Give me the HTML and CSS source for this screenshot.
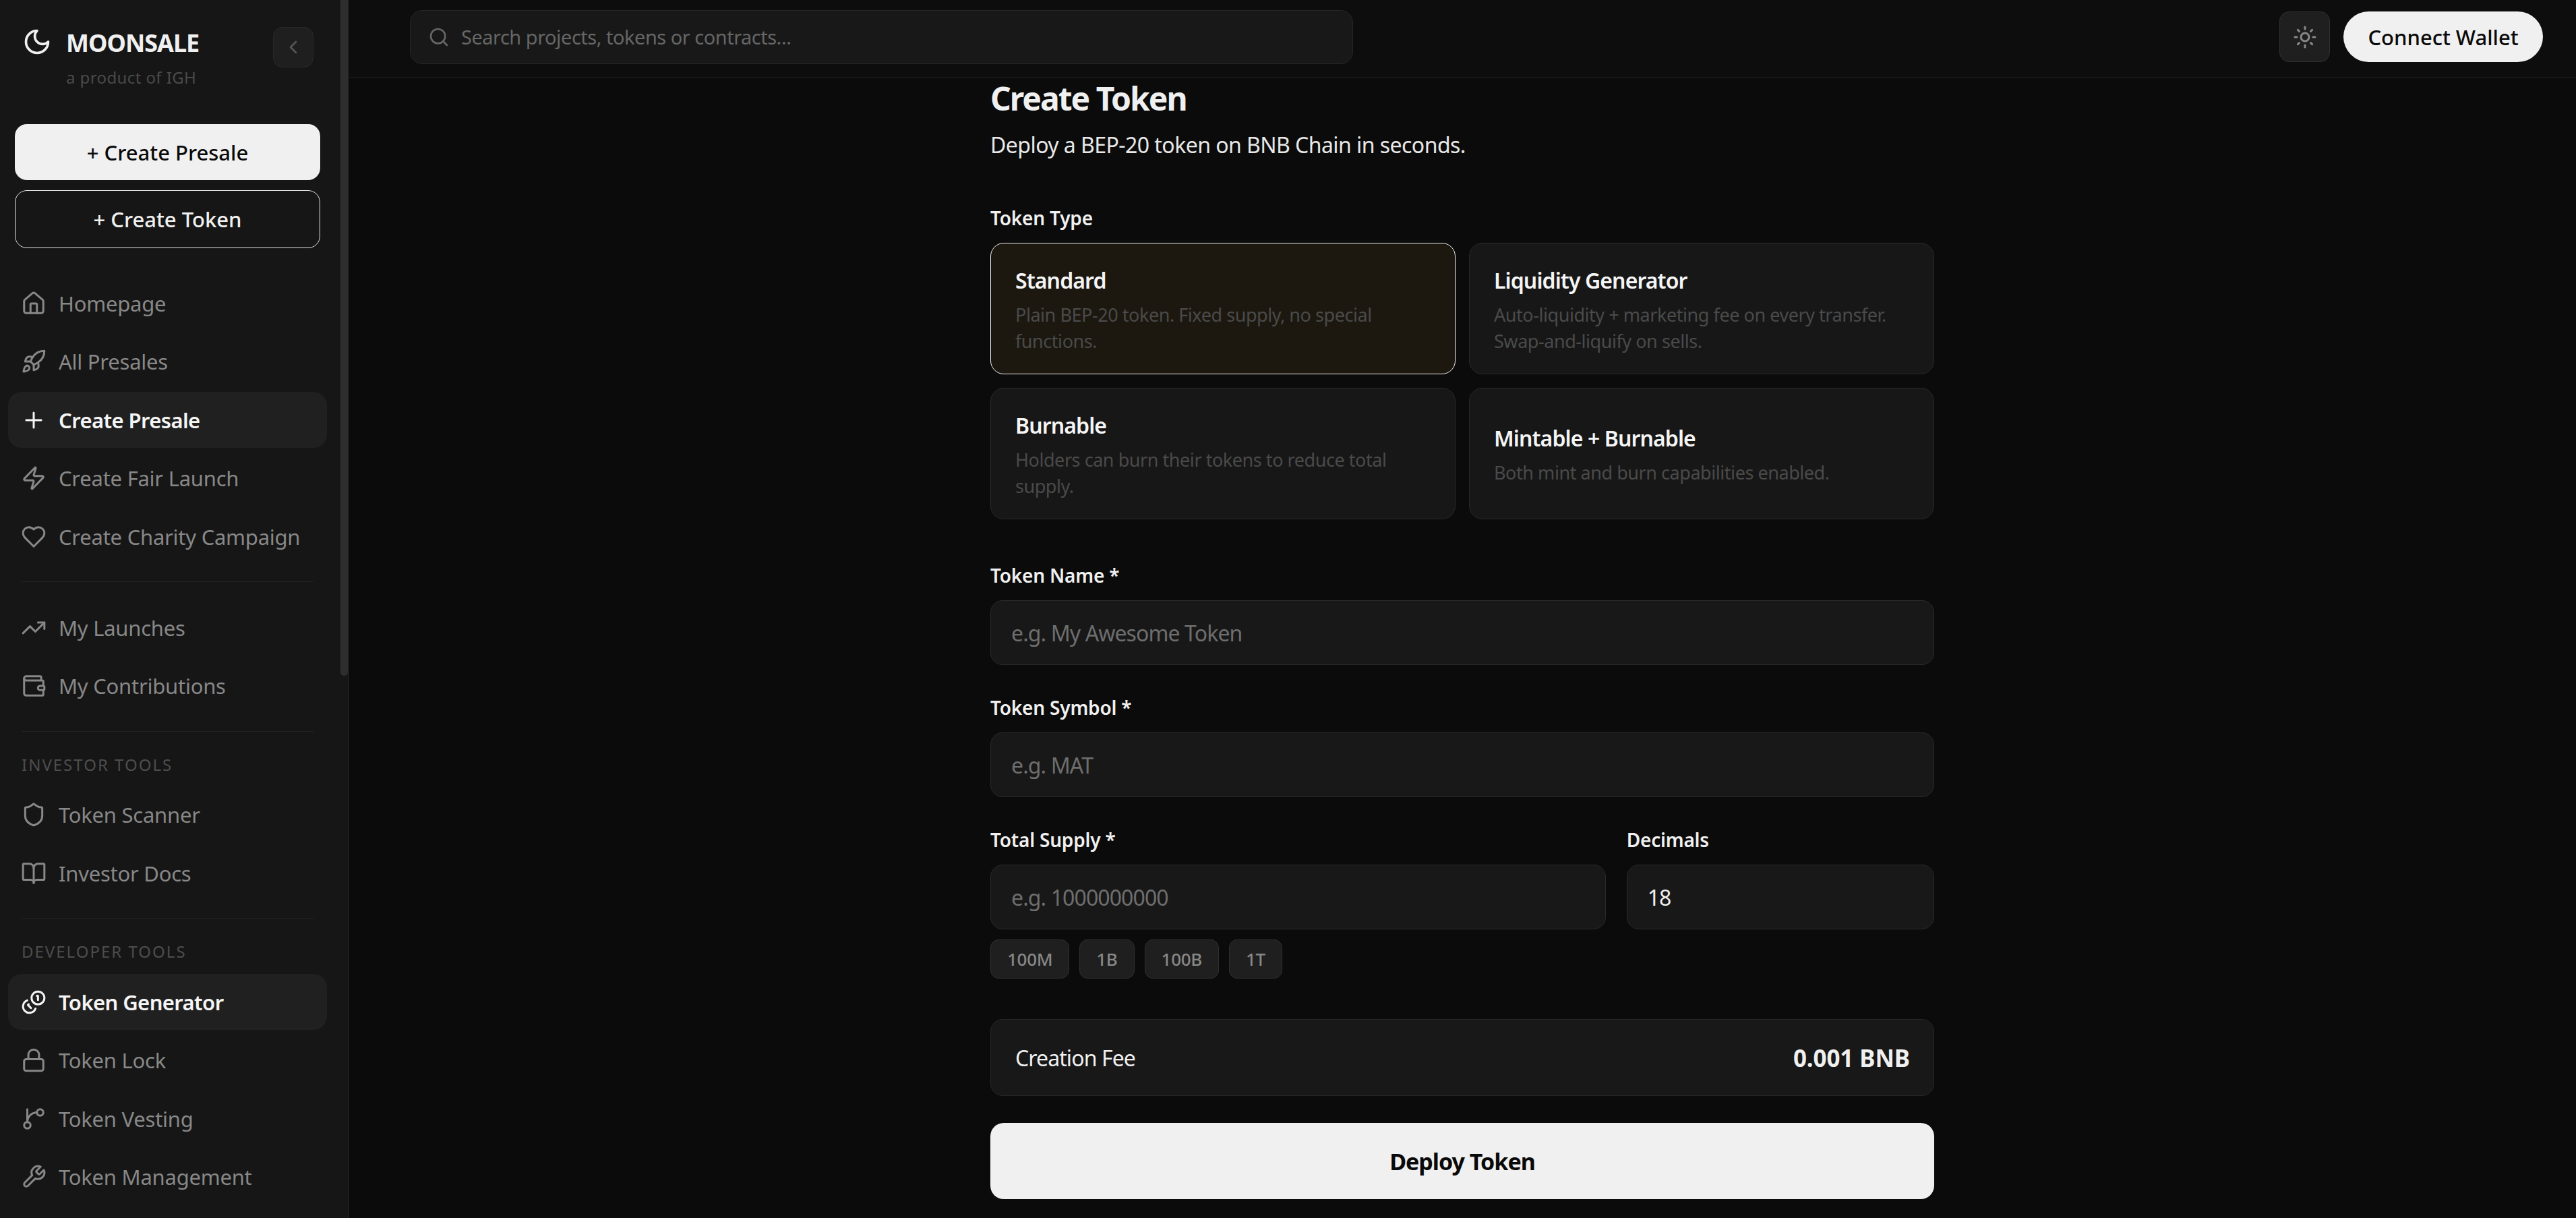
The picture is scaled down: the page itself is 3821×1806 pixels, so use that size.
FILE: index.html
```html
<!DOCTYPE html>
<html lang="en">
<head>
    <meta charset="UTF-8">
    <title>Create Token - Moonsale</title>
    <link rel="stylesheet" href="styles.css">
</head>
<body>
    <aside class="sidebar">
        <div class="scroll-thumb"></div>
        <div class="brand">
            <svg class="brand-icon" viewBox="0 0 24 24"><path d="M12 3a6 6 0 0 0 9 9 9 9 0 1 1-9-9Z"/></svg>
            <div class="brand-text">
                <div class="brand-name">MOONSALE</div>
                <div class="brand-sub">a product of IGH</div>
            </div>
            <button class="collapse">
                <svg viewBox="0 0 24 24"><path d="m15 18-6-6 6-6"/></svg>
            </button>
        </div>

        <div class="cta">
            <a class="btn-solid">+ Create Presale</a>
            <a class="btn-outline">+ Create Token</a>
        </div>

        <nav class="nav-group first">
            <a class="nav-item"><svg viewBox="0 0 24 24"><path d="M15 21v-8a1 1 0 0 0-1-1h-4a1 1 0 0 0-1 1v8"/><path d="M3 10a2 2 0 0 1 .709-1.528l7-5.999a2 2 0 0 1 2.582 0l7 5.999A2 2 0 0 1 21 10v9a2 2 0 0 1-2 2H5a2 2 0 0 1-2-2z"/></svg>Homepage</a>
            <a class="nav-item"><svg viewBox="0 0 24 24"><path d="M4.5 16.5c-1.5 1.26-2 5-2 5s3.74-.5 5-2c.71-.84.7-2.13-.09-2.91a2.18 2.18 0 0 0-2.91-.09z"/><path d="m12 15-3-3a22 22 0 0 1 2-3.95A12.88 12.88 0 0 1 22 2c0 2.72-.78 7.5-6 11a22.35 22.35 0 0 1-4 2z"/><path d="M9 12H4s.55-3.03 2-4c1.62-1.08 5 0 5 0"/><path d="M12 15v5s3.03-.55 4-2c1.08-1.62 0-5 0-5"/></svg>All Presales</a>
            <a class="nav-item active"><svg viewBox="0 0 24 24"><path d="M5 12h14"/><path d="M12 5v14"/></svg>Create Presale</a>
            <a class="nav-item"><svg viewBox="0 0 24 24"><path d="M4 14a1 1 0 0 1-.78-1.63l9.9-10.2a.5.5 0 0 1 .86.46l-1.92 6.02A1 1 0 0 0 13 10h7a1 1 0 0 1 .78 1.63l-9.9 10.2a.5.5 0 0 1-.86-.46l1.92-6.02A1 1 0 0 0 11 14z"/></svg>Create Fair Launch</a>
            <a class="nav-item"><svg viewBox="0 0 24 24"><path d="M19 14c1.49-1.46 3-3.21 3-5.5A5.5 5.5 0 0 0 16.5 3c-1.76 0-3 .5-4.5 2-1.5-1.5-2.74-2-4.5-2A5.5 5.5 0 0 0 2 8.5c0 2.3 1.5 4.05 3 5.5l7 7Z"/></svg>Create Charity Campaign</a>
        </nav>
        <div class="divider"></div>
        <nav class="nav-group">
            <a class="nav-item"><svg viewBox="0 0 24 24"><path d="M22 7l-8.5 8.5-5-5L2 17"/><path d="M16 7h6v6"/></svg>My Launches</a>
            <a class="nav-item"><svg viewBox="0 0 24 24"><path d="M19 7V4a1 1 0 0 0-1-1H5a2 2 0 0 0 0 4h15a1 1 0 0 1 1 1v4h-3a2 2 0 0 0 0 4h3a1 1 0 0 0 1-1v-2a1 1 0 0 0-1-1"/><path d="M3 5v14a2 2 0 0 0 2 2h15a1 1 0 0 0 1-1v-4"/></svg>My Contributions</a>
        </nav>
        <div class="divider"></div>
        <div class="nav-label">INVESTOR TOOLS</div>
        <nav class="nav-group">
            <a class="nav-item"><svg viewBox="0 0 24 24"><path d="M20 13c0 5-3.5 7.5-7.66 8.95a1 1 0 0 1-.67-.01C7.5 20.5 4 18 4 13V6a1 1 0 0 1 1-1c2 0 4.5-1.2 6.24-2.72a1.17 1.17 0 0 1 1.52 0C14.51 3.81 17 5 19 5a1 1 0 0 1 1 1z"/></svg>Token Scanner</a>
            <a class="nav-item"><svg viewBox="0 0 24 24"><path d="M12 7v14"/><path d="M3 18a1 1 0 0 1-1-1V4a1 1 0 0 1 1-1h5a4 4 0 0 1 4 4 4 4 0 0 1 4-4h5a1 1 0 0 1 1 1v13a1 1 0 0 1-1 1h-6a3 3 0 0 0-3 3 3 3 0 0 0-3-3z"/></svg>Investor Docs</a>
        </nav>
        <div class="divider"></div>
        <div class="nav-label">DEVELOPER TOOLS</div>
        <nav class="nav-group">
            <a class="nav-item active"><svg viewBox="0 0 24 24"><circle cx="16" cy="8" r="6"/><path d="M15 6h1v4"/><path d="M5.91 10.37A6 6 0 1 0 13.66 18"/><path d="m7.29 13.88-.7.71 2.82 2.82"/></svg>Token Generator</a>
            <a class="nav-item"><svg viewBox="0 0 24 24"><rect x="3" y="11" width="18" height="11" rx="2"/><path d="M7 11V7a5 5 0 0 1 10 0v4"/></svg>Token Lock</a>
            <a class="nav-item"><svg viewBox="0 0 24 24"><path d="M6 3v12"/><circle cx="18" cy="6" r="3"/><circle cx="6" cy="18" r="3"/><path d="M15 6a9 9 0 0 0-9 9"/></svg>Token Vesting</a>
            <a class="nav-item"><svg viewBox="0 0 24 24"><path d="M14.7 6.3a1 1 0 0 0 0 1.4l1.6 1.6a1 1 0 0 0 1.4 0l3.77-3.77a6 6 0 0 1-7.94 7.94l-6.91 6.91a2.12 2.12 0 0 1-3-3l6.91-6.91a6 6 0 0 1 7.94-7.94l-3.76 3.76z"/></svg>Token Management</a>
        </nav>
    </aside>

    <div class="main">
        <header class="topbar">
            <div class="search">
                <svg viewBox="0 0 24 24"><circle cx="11" cy="11" r="8"/><path d="m21 21-4.3-4.3"/></svg>
                <span>Search projects, tokens or contracts...</span>
            </div>
            <div class="top-actions">
                <button class="theme">
                    <svg viewBox="0 0 24 24"><circle cx="12" cy="12" r="4"/><path d="M12 2v2"/><path d="M12 20v2"/><path d="m4.93 4.93 1.41 1.41"/><path d="m17.66 17.66 1.41 1.41"/><path d="M2 12h2"/><path d="M20 12h2"/><path d="m6.34 17.66-1.41 1.41"/><path d="m19.07 4.93-1.41 1.41"/></svg>
                </button>
                <button class="connect">Connect Wallet</button>
            </div>
        </header>

        <main class="content">
            <h1>Create Token</h1>
            <p class="lead">Deploy a BEP-20 token on BNB Chain in seconds.</p>

            <div class="field-label type-label">Token Type</div>
            <div class="types">
                <div class="type selected">
                    <div class="type-title">Standard</div>
                    <div class="type-desc">Plain BEP-20 token. Fixed supply, no special functions.</div>
                </div>
                <div class="type">
                    <div class="type-title">Liquidity Generator</div>
                    <div class="type-desc">Auto-liquidity + marketing fee on every transfer. Swap-and-liquify on sells.</div>
                </div>
                <div class="type">
                    <div class="type-title">Burnable</div>
                    <div class="type-desc">Holders can burn their tokens to reduce total supply.</div>
                </div>
                <div class="type">
                    <div class="type-title">Mintable + Burnable</div>
                    <div class="type-desc">Both mint and burn capabilities enabled.</div>
                </div>
            </div>

            <div class="field">
                <label class="field-label">Token Name *</label>
                <input class="input" placeholder="e.g. My Awesome Token">
            </div>
            <div class="field">
                <label class="field-label">Token Symbol *</label>
                <input class="input" placeholder="e.g. MAT">
            </div>
            <div class="supply-row">
                <div>
                    <label class="field-label">Total Supply *</label>
                    <input class="input" placeholder="e.g. 1000000000">
                </div>
                <div>
                    <label class="field-label">Decimals</label>
                    <input class="input" value="18">
                </div>
            </div>
            <div class="chips">
                <button class="chip">100M</button>
                <button class="chip">1B</button>
                <button class="chip">100B</button>
                <button class="chip">1T</button>
            </div>

            <div class="fee">
                <span>Creation Fee</span>
                <strong>0.001 BNB</strong>
            </div>
            <button class="deploy">Deploy Token</button>
        </main>
    </div>
</body>
</html>
```

FILE: styles.css
```css
* {
    box-sizing: border-box;
}
body {
    display: flex;
    height: 100vh;
    margin: 0;
    overflow: hidden;
    background-color: #0b0b0b;
    color: #f0f0f0;
    font-family: "Noto Sans", "Open Sans", sans-serif;
}
svg {
    fill: none;
    stroke: currentColor;
    stroke-width: 2;
    stroke-linecap: round;
    stroke-linejoin: round;
    flex-shrink: 0;
}
button {
    font-family: inherit;
    cursor: pointer;
}

/* sidebar */
.sidebar {
    position: relative;
    flex: 0 0 517px;
    padding-right: 11px;
    background-color: #161616;
    border-right: 1px solid #2a2a2a;
    overflow: hidden;
}
.scroll-thumb {
    position: absolute;
    top: 0;
    right: 0;
    width: 11px;
    height: 1002px;
    background-color: #2e2e2e;
    border-radius: 0 0 5px 5px;
}
.brand {
    display: flex;
    align-items: flex-start;
    height: 184px;
    padding: 40px 40px 0 36px;
}
.brand-icon {
    width: 44px;
    height: 44px;
    margin: 0 21px 0 -3px;
    color: #f0f0f0;
}
.brand-text {
    flex: 1;
}
.brand-name {
    font-size: 36px;
    font-weight: 700;
    line-height: 48px;
    letter-spacing: -1px;
}
.brand-sub {
    margin-top: 10px;
    font-size: 24px;
    line-height: 34px;
    letter-spacing: .4px;
    color: #4a4a4a;
}
.collapse {
    display: flex;
    align-items: center;
    justify-content: center;
    width: 60px;
    height: 60px;
    padding: 0;
    background-color: #1f1f1f;
    border: 1px solid #2a2a2a;
    border-radius: 14px;
    color: #555;
}
.collapse svg {
    width: 32px;
    height: 32px;
}
.cta {
    display: flex;
    flex-direction: column;
    gap: 15px;
    margin: 0 30px 40px 22px;
}
.btn-solid, .btn-outline {
    display: flex;
    align-items: center;
    justify-content: center;
    font-size: 31px;
    font-weight: 500;
    border-radius: 18px;
}
.btn-solid {
    height: 83px;
    background-color: #f0f0f0;
    color: #0a0a0a;
}
.btn-outline {
    height: 86px;
    border: 1px solid #e8e8e8;
    color: #f0f0f0;
}
.nav-group {
    display: flex;
    flex-direction: column;
    gap: 3.5px;
    padding: 0 20px 0 12px;
}
.nav-item {
    display: flex;
    align-items: center;
    gap: 18px;
    height: 83px;
    padding-left: 19px;
    border-radius: 20px;
    font-size: 31px;
    letter-spacing: -.25px;
    color: #888;
}
.nav-item svg {
    width: 38px;
    height: 38px;
    stroke-width: 1.9;
}
.nav-item.active {
    background-color: #202020;
    color: #f5f5f5;
    font-weight: 600;
    letter-spacing: -.6px;
}
.divider {
    height: 1px;
    margin: 25px 40px 26px 32px;
    background-color: #232323;
}
.nav-label {
    height: 35px;
    margin: 31px 0 16px 32px;
    font-size: 24px;
    line-height: 35px;
    letter-spacing: 2px;
    color: #4d4d4d;
}

/* top bar */
.main {
    flex: 1;
    min-width: 0;
}
.topbar {
    display: flex;
    align-items: center;
    justify-content: space-between;
    height: 115px;
    padding: 0 49px 5px 91px;
    background-color: #0d0d0d;
    border-bottom: 1px solid #1f1f1f;
}
.search {
    display: flex;
    align-items: center;
    gap: 17px;
    width: 1399px;
    height: 80px;
    padding-left: 26px;
    background-color: #181818;
    border: 1px solid #262626;
    border-radius: 18px;
    font-size: 29px;
    letter-spacing: -.5px;
    color: #666;
}
.search svg {
    width: 32px;
    height: 32px;
}
.top-actions {
    display: flex;
    gap: 20px;
}
.theme {
    display: flex;
    align-items: center;
    justify-content: center;
    width: 75px;
    height: 75px;
    padding: 0;
    background-color: #1f1f1f;
    border: 1px solid #2f2f2f;
    border-radius: 14px;
    color: #888;
}
.theme svg {
    width: 36px;
    height: 36px;
}
.connect {
    width: 296px;
    height: 75px;
    padding: 0;
    background-color: #f0f0f0;
    border: 0;
    border-radius: 38px;
    font-size: 31px;
    font-weight: 500;
    color: #0a0a0a;
}

/* form */
.content {
    width: 1400px;
    margin: 0 auto;
}
h1 {
    margin: 0;
    font-size: 48px;
    font-weight: 700;
    line-height: 62px;
    letter-spacing: -2px;
}
.lead {
    margin: 16px 0 0;
    font-size: 32px;
    line-height: 44px;
    letter-spacing: -.55px;
    color: #e8e8e8;
}
.field-label {
    display: block;
    height: 40px;
    font-size: 28px;
    font-weight: 600;
    line-height: 40px;
    letter-spacing: -.2px;
    color: #f0f0f0;
}
.type-label {
    margin-top: 66px;
}
.types {
    display: grid;
    grid-template-columns: 1fr 1fr;
    grid-auto-rows: 195px;
    gap: 20px;
    margin-top: 17px;
}
.type {
    display: flex;
    flex-direction: column;
    justify-content: center;
    padding: 3px 36px 0;
    background-color: #171717;
    border: 1px solid #2a2a2a;
    border-radius: 20px;
}
.type.selected {
    background-color: #1c1810;
    border-color: #f0f0f0;
}
.type-title {
    font-size: 32px;
    font-weight: 600;
    line-height: 44px;
    letter-spacing: -.9px;
    color: #f5f5f5;
}
.type-desc {
    margin-top: 9px;
    font-size: 27px;
    line-height: 39px;
    letter-spacing: -.45px;
    color: #4a4a4a;
}
.field {
    margin-top: 63px;
}
.field + .field {
    margin-top: 43px;
}
.input {
    display: block;
    width: 100%;
    height: 96px;
    margin-top: 17px;
    padding: 0 30px;
    background-color: #181818;
    border: 1px solid #2a2a2a;
    border-radius: 18px;
    font-family: inherit;
    font-size: 32px;
    letter-spacing: -.9px;
    color: #f0f0f0;
    outline: none;
}
.input::placeholder {
    color: #6e6e6e;
    opacity: 1;
}
.supply-row {
    display: grid;
    grid-template-columns: 2fr 1fr;
    gap: 31px;
    margin-top: 43px;
}
.chips {
    display: flex;
    gap: 15px;
    margin-top: 15px;
}
.chip {
    height: 58px;
    padding: 0 24px;
    background-color: #1f1f1f;
    border: 1px solid #2f2f2f;
    border-radius: 12px;
    font-size: 26px;
    font-weight: 500;
    letter-spacing: -.3px;
    color: #888;
}
.fee {
    display: flex;
    align-items: center;
    justify-content: space-between;
    height: 114px;
    margin-top: 60px;
    padding: 0 35px 0 36px;
    background-color: #181818;
    border: 1px solid #262626;
    border-radius: 18px;
    font-size: 32px;
    letter-spacing: -.9px;
    color: #f0f0f0;
}
.fee strong {
    font-size: 35px;
    font-weight: 700;
    letter-spacing: -.1px;
}
.deploy {
    display: block;
    width: 100%;
    height: 113px;
    margin-top: 40px;
    background-color: #f0f0f0;
    border: 0;
    border-radius: 20px;
    font-size: 34px;
    font-weight: 700;
    letter-spacing: -1px;
    color: #0a0a0a;
}
```
